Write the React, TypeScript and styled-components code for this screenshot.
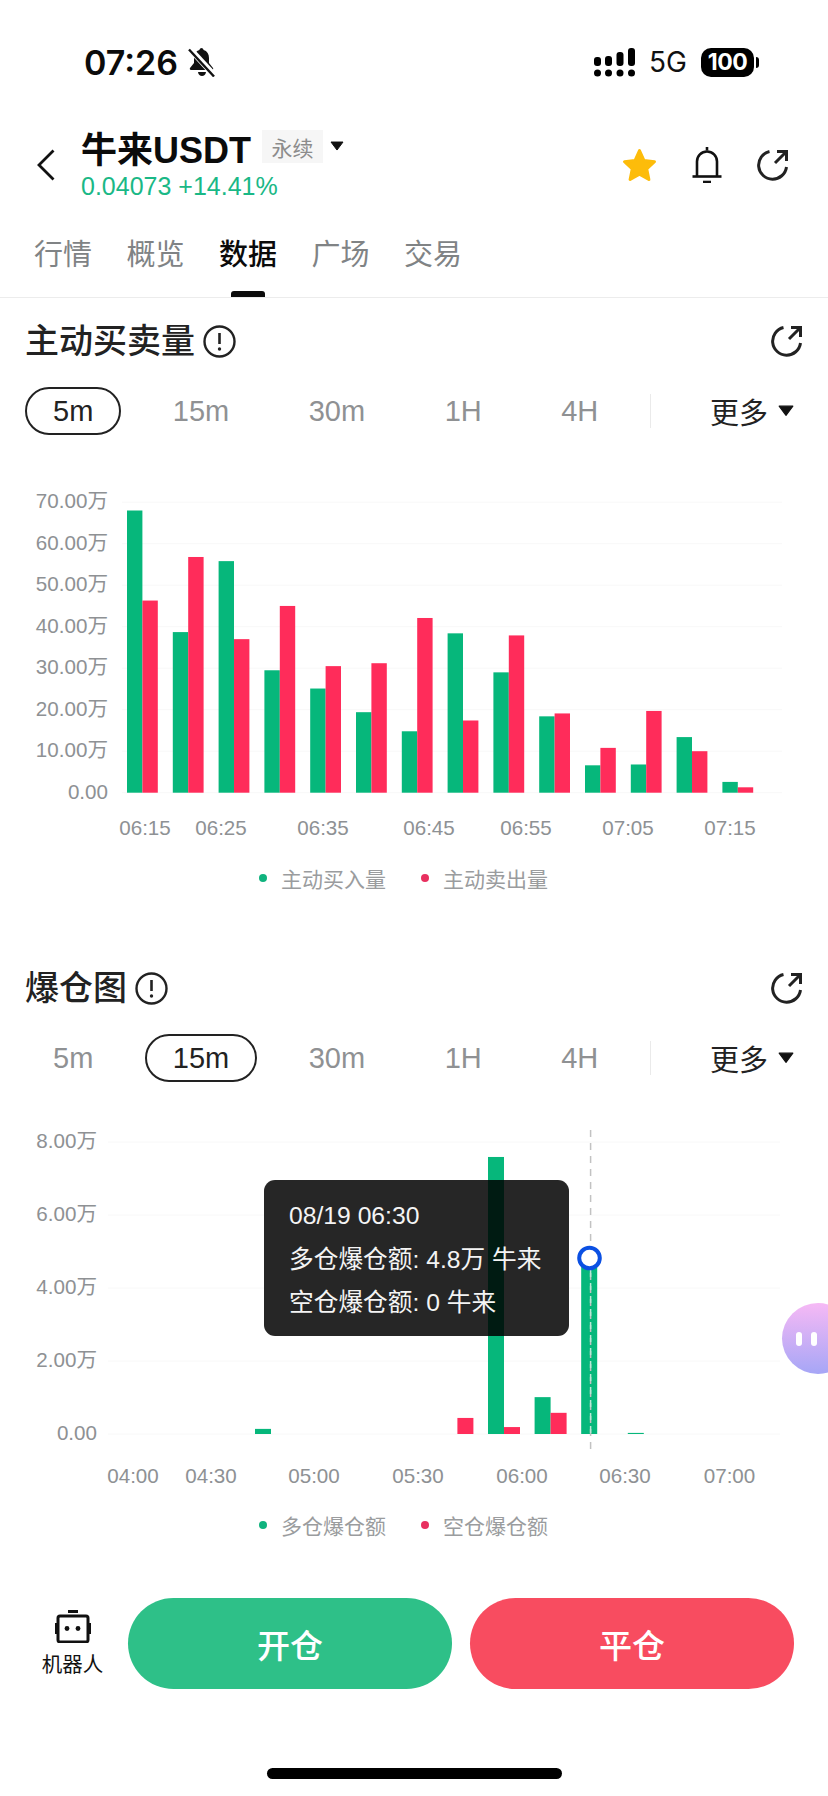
import React from "react";
import styled, { createGlobalStyle } from "styled-components";

const GlobalStyle = createGlobalStyle`
  html, body {
    margin: 0;
    padding: 0;
    background: #fff;
  }
  body {
    font-family: "Liberation Sans", "Noto Sans CJK SC", sans-serif;
    color: #111;
  }
  * {
    box-sizing: border-box;
  }
`;

const Page = styled.div`
  width: 828px;
  height: 1796px;
  overflow: hidden;
  display: flex;
  flex-direction: column;
  background: #fff;
`;

const StatusBar = styled.div`
  height: 124px;
  padding: 0 69px 0 84px;
  display: flex;
  align-items: center;
`;

const Clock = styled.span`
  font-family: "Inter", sans-serif;
  font-size: 34px;
  font-weight: 600;
  color: #0b0b0b;
`;

const StatusRight = styled.div`
  margin-left: auto;
  display: flex;
  align-items: center;
  gap: 14px;
`;

const NetworkLabel = styled.span`
  font-family: "Inter", sans-serif;
  font-size: 28px;
  color: #111;
`;

const Battery = styled.div`
  position: relative;
  width: 53px;
  height: 29px;
  border-radius: 10px;
  background: #000;
  color: #fff;
  font-family: "Inter", sans-serif;
  font-size: 23px;
  font-weight: 700;
  display: flex;
  align-items: center;
  justify-content: center;
  letter-spacing: -0.5px;
  margin-right: 5px;

  &::after {
    content: "";
    position: absolute;
    right: -5px;
    top: 9px;
    width: 3px;
    height: 11px;
    border-radius: 0 3px 3px 0;
    background: #000;
  }
`;

const Header = styled.div`
  height: 82px;
  padding: 0 39px 0 37px;
  display: flex;
  align-items: center;
`;

const TitleColumn = styled.div`
  margin-left: 26px;
  margin-top: -3px;
  display: flex;
  flex-direction: column;
  gap: 4px;
`;

const TitleRow = styled.div`
  display: flex;
  align-items: center;
  height: 40px;
`;

const Title = styled.span`
  font-size: 36px;
  font-weight: 600;
  color: #0b0b0b;
`;

const Badge = styled.span`
  margin-left: 11px;
  width: 61px;
  height: 33px;
  background: #f6f6f6;
  color: #8c8c8c;
  font-size: 21px;
  display: flex;
  align-items: center;
  justify-content: center;
`;

const Price = styled.span`
  font-size: 25px;
  line-height: 30px;
  color: #1ab886;
`;

const HeaderActions = styled.div`
  margin-left: auto;
  display: flex;
  align-items: center;
  gap: 35px;
`;

const TabBar = styled.div`
  height: 92px;
  padding-left: 34px;
  border-bottom: 1px solid #ececec;
  display: flex;
  gap: 34.5px;
`;

const Tab = styled.div<{ $active?: boolean }>`
  position: relative;
  height: 91px;
  padding-top: 29px;
  font-size: 29px;
  line-height: 40px;
  font-weight: ${(p) => (p.$active ? 500 : 400)};
  color: ${(p) => (p.$active ? "#0b0b0b" : "#808385")};

  ${(p) =>
    p.$active &&
    `
    &::after {
      content: "";
      position: absolute;
      left: 12px;
      bottom: 0;
      width: 34px;
      height: 6px;
      border-radius: 3px 3px 0 0;
      background: #0b0b0b;
    }
  `}
`;

const Section = styled.section`
  padding-top: 25px;
  padding-bottom: 54px;
`;

const SectionHead = styled.div`
  min-height: 36px;
  padding: 0 25px;
  display: flex;
  align-items: center;
  justify-content: space-between;
`;

const SectionTitle = styled.div`
  display: flex;
  align-items: center;
  gap: 8px;
  font-size: 34px;
  line-height: 36px;
  font-weight: 500;
  color: #222;
`;

const RangeRow = styled.div`
  margin-top: 28px;
  height: 48px;
  padding: 0 34px 0 25px;
  display: flex;
  align-items: center;
  gap: 23.5px;
`;

const RangeItem = styled.div<{ $active?: boolean }>`
  height: 48px;
  padding: 0 26px;
  border-radius: 24px;
  border: 2px solid ${(p) => (p.$active ? "#222" : "transparent")};
  font-size: 29px;
  display: flex;
  align-items: center;
  color: ${(p) => (p.$active ? "#222" : "#8f9193")};
`;

const RangeDivider = styled.div`
  width: 1px;
  height: 34px;
  background: #eaeaea;
`;

const MoreButton = styled.div`
  margin-left: auto;
  display: flex;
  align-items: center;
  gap: 10px;
  font-size: 29px;
  color: #222;
`;

const ChartBox = styled.div<{ $top: number; $height: number }>`
  position: relative;
  margin-top: ${(p) => p.$top}px;
  height: ${(p) => p.$height}px;

  svg {
    display: block;
  }
`;

const AxisLabel = styled.text`
  font-size: 20.6px;
  fill: #8e9194;
  font-family: "Liberation Sans", "Noto Sans CJK SC", sans-serif;
`;

const Legend = styled.div<{ $top: number }>`
  margin-top: ${(p) => p.$top}px;
  margin-bottom: 1px;
  height: 24px;
  padding-right: 21px;
  display: flex;
  justify-content: center;
  gap: 35px;
`;

const LegendItem = styled.div`
  display: flex;
  align-items: center;
  gap: 14px;
  font-size: 21px;
  color: #9a9c9e;
`;

const LegendDot = styled.span<{ $color: string }>`
  width: 8px;
  height: 8px;
  border-radius: 50%;
  background: ${(p) => p.$color};
`;

const Tooltip = styled.div`
  position: absolute;
  left: 264px;
  top: 50px;
  width: 305px;
  height: 156px;
  padding: 14px 0 0 25px;
  border-radius: 11px;
  background: rgba(0, 0, 0, 0.85);
  color: #f4f4f4;
  font-size: 24.7px;
  line-height: 43.5px;
  white-space: nowrap;
`;

const Assistant = styled.div`
  position: absolute;
  left: 782px;
  top: 173px;
  width: 72px;
  height: 71px;
  border-radius: 50%;
  background: linear-gradient(180deg, #f6b9f5 0%, #a6a6f6 100%);
  display: flex;
  align-items: center;
  padding-left: 14px;
  gap: 9px;
`;

const AssistantEye = styled.span`
  width: 6px;
  height: 14px;
  border-radius: 3px;
  background: #fff;
`;

const BottomBar = styled.div`
  margin-top: 6px;
  height: 91px;
  padding: 0 34px 0 42px;
  display: flex;
  align-items: center;
`;

const RobotEntry = styled.div`
  width: 61px;
  margin-right: 25px;
  display: flex;
  flex-direction: column;
  align-items: center;
  gap: 10px;
  font-size: 20.5px;
  line-height: 24px;
  color: #111;
  white-space: nowrap;
`;

const Actions = styled.div`
  flex: 1;
  display: flex;
  gap: 18px;
`;

const TradeButton = styled.div<{ $color: string }>`
  flex: 1;
  height: 91px;
  border-radius: 46px;
  background: ${(p) => p.$color};
  color: #fff;
  font-size: 33px;
  font-weight: 500;
  display: flex;
  align-items: center;
  justify-content: center;
`;

const HomeIndicator = styled.div`
  margin: 79px auto 0;
  width: 295px;
  height: 11px;
  border-radius: 6px;
  background: #000;
`;

const GREEN = "#06b77b";
const RED = "#ff2c5a";

const MutedBellIcon = () => (
  <svg width="28" height="30" viewBox="0 0 28 30" style={{ marginLeft: 10 }}>
    <path
      d="M14 1c-1.5 0-2.4.9-2.6 2C7.8 4 6 7 6 11v5l-4 5c-.6.9 0 2 1 2h21c1 0 1.6-1.1 1-2l-4-5v-5c0-4-1.8-7-5.4-8-.2-1.1-1.1-2-2.600-2z"
      fill="#111"
    />
    <path d="M10 25h8c-.3 2.500-2 4-4 4s-3.700-1.500-4-4z" fill="#111" />
    <path d="M1 1l26 28" stroke="#fff" strokeWidth="6" />
    <path d="M1 2.500l25 27" stroke="#111" strokeWidth="2.400" />
  </svg>
);

const SignalIcon = () => (
  <svg width="41" height="29" viewBox="0 0 41 29" fill="#000">
    <rect x="0" y="9" width="7" height="9" rx="3" />
    <rect x="11" y="8" width="7" height="10" rx="3" />
    <rect x="22.500" y="4" width="7" height="14" rx="3" />
    <rect x="34" y="0" width="7" height="18" rx="3" />
    <circle cx="3.500" cy="25" r="3.500" />
    <circle cx="14.500" cy="25" r="3.500" />
    <circle cx="26" cy="25" r="3.500" />
    <circle cx="37.500" cy="25" r="3.500" />
  </svg>
);

const BackIcon = () => (
  <svg width="18" height="32" viewBox="0 0 18 32" fill="none">
    <path d="M16.500 1.500L2 16l14.500 14.500" stroke="#111" strokeWidth="2.800" />
  </svg>
);

const CaretIcon = ({ size = 14, style }: { size?: number; style?: React.CSSProperties }) => (
  <svg width={size} height={size * 0.72} viewBox="0 0 14 10" style={style}>
    <path d="M1 1h12L7 9z" fill="#111" stroke="#111" strokeLinejoin="round" />
  </svg>
);

const StarIcon = () => (
  <svg width="35" height="34" viewBox="0 0 35 34">
    <path
      d="M17.500 2.500l4.500 10 10.500 1.200-7.800 7.200 2.200 10.600-9.400-5.400-9.400 5.400 2.200-10.600-7.800-7.200 10.500-1.200z"
      fill="#fdbc0a"
      stroke="#fdbc0a"
      strokeWidth="3"
      strokeLinejoin="round"
    />
  </svg>
);

const BellIcon = () => (
  <svg width="30" height="36" viewBox="0 0 30 36" fill="none" stroke="#111" strokeWidth="2.600">
    <path d="M15 0v3.500" />
    <path d="M5 29V14.500a10 10 0 0 1 20 0V29" />
    <path d="M0.500 29.500h29" />
    <path d="M11 35h8" />
  </svg>
);

const ShareIcon = () => (
  <svg width="32" height="32" viewBox="0 0 32 32" fill="none" stroke="#222" strokeWidth="3">
    <path d="M12.500 2.500A14 14 0 1 0 29.500 18" />
    <path d="M18 14L29 3" />
    <path d="M20 2.500h9.500V12" />
  </svg>
);

const InfoIcon = () => (
  <svg width="33" height="33" viewBox="0 0 33 33" fill="none" stroke="#222">
    <circle cx="16.500" cy="16.500" r="15" strokeWidth="2.400" />
    <path d="M16.500 8v11" strokeWidth="2.600" />
    <circle cx="16.500" cy="24" r="1.700" fill="#222" stroke="none" />
  </svg>
);

const RobotIcon = () => (
  <svg width="36" height="33" viewBox="0 0 36 33" fill="none">
    <rect x="13" y="0" width="10" height="3" fill="#111" />
    <rect x="3" y="6" width="30" height="26" rx="2" stroke="#111" strokeWidth="3" />
    <rect x="0" y="13" width="2" height="11" fill="#111" />
    <rect x="34" y="13" width="2" height="11" fill="#111" />
    <circle cx="12" cy="18.500" r="2.400" fill="#111" />
    <circle cx="23" cy="18.500" r="2.400" fill="#111" />
  </svg>
);

const SectionHeader = ({ title }: { title: string }) => (
  <SectionHead>
    <SectionTitle>
      {title}
      <InfoIcon />
    </SectionTitle>
    <ShareIcon />
  </SectionHead>
);

const RangeTabs = ({ active }: { active: string }) => (
  <RangeRow>
    {["5m", "15m", "30m", "1H", "4H"].map((r) => (
      <RangeItem key={r} $active={r === active}>
        {r}
      </RangeItem>
    ))}
    <RangeDivider />
    <MoreButton>
      更多
      <CaretIcon size={16} />
    </MoreButton>
  </RangeRow>
);

const ChartLegend = ({ items, top }: { items: string[]; top: number }) => (
  <Legend $top={top}>
    <LegendItem>
      <LegendDot $color="#0fb37e" />
      {items[0]}
    </LegendItem>
    <LegendItem>
      <LegendDot $color="#e8305f" />
      {items[1]}
    </LegendItem>
  </Legend>
);

// 主动买卖量, [买入, 卖出] in 万
const volumeData = [
  [68.0, 46.3],
  [38.7, 56.8],
  [55.8, 37.0],
  [29.5, 45.0],
  [25.1, 30.5],
  [19.4, 31.2],
  [14.8, 42.1],
  [38.4, 17.4],
  [29.0, 37.9],
  [18.4, 19.1],
  [6.6, 10.8],
  [6.8, 19.7],
  [13.4, 10.0],
  [2.6, 1.3],
];
const volumeTimes: [string, number][] = [
  ["06:15", 145],
  ["06:25", 221],
  ["06:35", 323],
  ["06:45", 429],
  ["06:55", 526],
  ["07:05", 628],
  ["07:15", 730],
];

const VolumeChart = () => {
  const base = 792.7;
  const scale = 4.15;
  return (
    <ChartBox $top={35} $height={380}>
      <svg width="828" height="380" viewBox="0 470 828 380">
        {[0, 10, 20, 30, 40, 50, 60, 70].map((v) => (
          <g key={v}>
            <line x1="122" x2="782" y1={base - v * scale} y2={base - v * scale} stroke="#f8f8f8" />
            <AxisLabel x="108" y={base - v * scale + 6} textAnchor="end">
              {v === 0 ? "0.00" : `${v}.00万`}
            </AxisLabel>
          </g>
        ))}
        {volumeData.map(([buy, sell], i) => {
          const x = 127 + i * 45.8;
          return (
            <g key={i}>
              <rect x={x} y={base - buy * scale} width="15.4" height={buy * scale} fill={GREEN} />
              <rect x={x + 15.4} y={base - sell * scale} width="15.4" height={sell * scale} fill={RED} />
            </g>
          );
        })}
        {volumeTimes.map(([t, x]) => (
          <AxisLabel key={t} x={x} y="835" textAnchor="middle">
            {t}
          </AxisLabel>
        ))}
      </svg>
    </ChartBox>
  );
};

// 爆仓图, [slot, 多仓, 空仓] in 万
const liquidationData = [
  [0, 0.14, 0],
  [4, 0, 0.44],
  [5, 7.59, 0.19],
  [6, 1.01, 0.58],
  [7, 4.8, 0],
  [8, 0.03, 0],
];
const liquidationTimes: [string, number][] = [
  ["04:00", 133],
  ["04:30", 211],
  ["05:00", 314],
  ["05:30", 418],
  ["06:00", 522],
  ["06:30", 625],
  ["07:00", 729.5],
];

const LiquidationChart = () => {
  const base = 1434;
  const scale = 36.5;
  const cursorX = 590.6;
  return (
    <ChartBox $top={48} $height={370}>
      <svg width="828" height="370" viewBox="0 1130 828 370">
        {[0, 2, 4, 6, 8].map((v) => (
          <g key={v}>
            <line x1="108" x2="780" y1={base - v * scale} y2={base - v * scale} stroke="#f8f8f8" />
            <AxisLabel x="97" y={base - v * scale + 6} textAnchor="end">
              {v === 0 ? "0.00" : `${v}.00万`}
            </AxisLabel>
          </g>
        ))}
        {liquidationData.map(([slot, long, short]) => {
          const x = 255 + slot * 46.6;
          return (
            <g key={slot}>
              <rect x={x} y={base - long * scale} width="16" height={long * scale} fill={GREEN} />
              <rect x={x + 16} y={base - short * scale} width="16" height={short * scale} fill={RED} />
            </g>
          );
        })}
        <line x1={cursorX} x2={cursorX} y1="1130" y2="1455" stroke="#c2c2c2" strokeWidth="1.500" strokeDasharray="7 6" />
        <line x1={cursorX} x2={cursorX} y1="1270" y2="1434" stroke="#b9e9d6" strokeWidth="1.500" strokeDasharray="7 6" />
        <circle cx="589.500" cy="1258" r="10.300" fill="#fff" stroke="#0b50e3" strokeWidth="4" />
        {liquidationTimes.map(([t, x]) => (
          <AxisLabel key={t} x={x} y="1483" textAnchor="middle">
            {t}
          </AxisLabel>
        ))}
      </svg>
      <Tooltip>
        <div>08/19 06:30</div>
        <div>多仓爆仓额: 4.8万 牛来</div>
        <div>空仓爆仓额: 0 牛来</div>
      </Tooltip>
      <Assistant>
        <AssistantEye />
        <AssistantEye />
      </Assistant>
    </ChartBox>
  );
};

const App: React.FC = () => {
  return (
    <Page>
      <GlobalStyle />
      <StatusBar>
        <Clock>07:26</Clock>
        <MutedBellIcon />
        <StatusRight>
          <SignalIcon />
          <NetworkLabel>5G</NetworkLabel>
          <Battery>100</Battery>
        </StatusRight>
      </StatusBar>

      <Header>
        <BackIcon />
        <TitleColumn>
          <TitleRow>
            <Title>牛来USDT</Title>
            <Badge>永续</Badge>
            <CaretIcon style={{ marginLeft: 7 }} />
          </TitleRow>
          <Price>0.04073 +14.41%</Price>
        </TitleColumn>
        <HeaderActions>
          <StarIcon />
          <BellIcon />
          <ShareIcon />
        </HeaderActions>
      </Header>

      <TabBar>
        <Tab>行情</Tab>
        <Tab>概览</Tab>
        <Tab $active>数据</Tab>
        <Tab>广场</Tab>
        <Tab>交易</Tab>
      </TabBar>

      <Section>
        <SectionHeader title="主动买卖量" />
        <RangeTabs active="5m" />
        <VolumeChart />
        <ChartLegend items={["主动买入量", "主动卖出量"]} top={16} />
      </Section>

      <Section>
        <SectionHeader title="爆仓图" />
        <RangeTabs active="15m" />
        <LiquidationChart />
        <ChartLegend items={["多仓爆仓额", "空仓爆仓额"]} top={13} />
      </Section>

      <BottomBar>
        <RobotEntry>
          <RobotIcon />
          机器人
        </RobotEntry>
        <Actions>
          <TradeButton $color="#2ec088">开仓</TradeButton>
          <TradeButton $color="#f84c60">平仓</TradeButton>
        </Actions>
      </BottomBar>
      <HomeIndicator />
    </Page>
  );
};

export default App;
